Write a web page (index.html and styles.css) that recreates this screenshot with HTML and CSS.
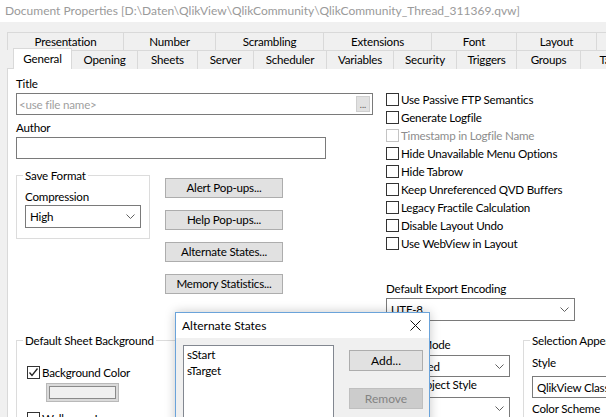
FILE: index.html
```html
<!DOCTYPE html>
<html>
<head>
<meta charset="utf-8">
<title>Document Properties</title>
<link rel="stylesheet" href="styles.css">
</head>
<body>
<div class="titlebar">Document Properties [D:\Daten\QlikView\QlikCommunity\QlikCommunity_Thread_311369.qvw]</div>

<div class="tabstrip">
  <div class="tabrow tabrow-back">
    <div class="tab">Presentation</div>
    <div class="tab">Number</div>
    <div class="tab">Scrambling</div>
    <div class="tab">Extensions</div>
    <div class="tab">Font</div>
    <div class="tab">Layout</div>
    <div class="tab"></div>
  </div>
  <div class="tabrow tabrow-front">
    <div class="tab tab-active">General</div>
    <div class="tab">Opening</div>
    <div class="tab">Sheets</div>
    <div class="tab">Server</div>
    <div class="tab">Scheduler</div>
    <div class="tab">Variables</div>
    <div class="tab">Security</div>
    <div class="tab">Triggers</div>
    <div class="tab">Groups</div>
    <div class="tab">Tabs</div>
  </div>
</div>

<div class="panel">
  <div class="top">
    <div class="col-left">
      <div class="label">Title</div>
      <div class="textbox textbox-title"><span>&lt;use file name&gt;</span><span class="browse">...</span></div>
      <div class="label label-gap">Author</div>
      <div class="textbox textbox-author"></div>

      <div class="row">
        <div class="group group-save">
          <div class="group-title">Save Format</div>
          <div class="label label-compression">Compression</div>
          <div class="select select-high"><span>High</span>
            <svg class="chev" width="9" height="5" viewBox="0 0 9 5"><polyline points="0.5,0.5 4.5,4.5 8.5,0.5" fill="none" stroke="#606060" stroke-width="1"/></svg>
          </div>
        </div>
        <div class="buttons">
          <div class="btn">Alert Pop-ups...</div>
          <div class="btn">Help Pop-ups...</div>
          <div class="btn">Alternate States...</div>
          <div class="btn">Memory Statistics...</div>
        </div>
      </div>
    </div>

    <div class="col-right">
      <div class="check"><span class="box"></span>Use Passive FTP Semantics</div>
      <div class="check"><span class="box"></span>Generate Logfile</div>
      <div class="check check-disabled"><span class="box"></span>Timestamp in Logfile Name</div>
      <div class="check"><span class="box"></span>Hide Unavailable Menu Options</div>
      <div class="check"><span class="box"></span>Hide Tabrow</div>
      <div class="check"><span class="box"></span>Keep Unreferenced QVD Buffers</div>
      <div class="check"><span class="box"></span>Legacy Fractile Calculation</div>
      <div class="check"><span class="box"></span>Disable Layout Undo</div>
      <div class="check"><span class="box"></span>Use WebView in Layout</div>

      <div class="label label-encoding">Default Export Encoding</div>
      <div class="select select-encoding"><span>UTF-8</span>
        <svg class="chev" width="9" height="5" viewBox="0 0 9 5"><polyline points="0.5,0.5 4.5,4.5 8.5,0.5" fill="none" stroke="#606060" stroke-width="1"/></svg>
      </div>
    </div>
  </div>

  <div class="bottom">
    <div class="group group-sheetbg">
      <div class="group-title">Default Sheet Background</div>
      <div class="check check-bg"><span class="box"><svg width="11" height="11" viewBox="0 0 11 11"><polyline points="1.5,5.5 4,8.5 9.5,1.5" fill="none" stroke="#222" stroke-width="1.3"/></svg></span>Background Color</div>
      <div class="colorbtn"><div class="colorbtn-inner"></div></div>
      <div class="check check-wall"><span class="box"></span>Wallpaper Image</div>
    </div>

    <div class="col-mid">
      <div class="label label-mode">Styling Mode</div>
      <div class="select select-mid"><span>Advanced</span>
        <svg class="chev" width="9" height="5" viewBox="0 0 9 5"><polyline points="0.5,0.5 4.5,4.5 8.5,0.5" fill="none" stroke="#606060" stroke-width="1"/></svg>
      </div>
      <div class="label">Sheet Object Style</div>
      <div class="select select-mid select-style"><span>Soft</span>
        <svg class="chev" width="9" height="5" viewBox="0 0 9 5"><polyline points="0.5,0.5 4.5,4.5 8.5,0.5" fill="none" stroke="#606060" stroke-width="1"/></svg>
      </div>
    </div>

    <div class="group group-selection">
      <div class="group-title">Selection Appearance</div>
      <div class="label label-style">Style</div>
      <div class="select select-sel"><span>QlikView Classic</span></div>
      <div class="label label-scheme">Color Scheme</div>
    </div>
  </div>
</div>

<div class="dialog">
  <div class="dialog-title">
    <span>Alternate States</span>
    <svg width="11" height="11" viewBox="0 0 11 11"><path d="M0.5 0.5 L10.5 10.5 M10.5 0.5 L0.5 10.5" stroke="#111" stroke-width="1" fill="none"/></svg>
  </div>
  <div class="dialog-body">
    <div class="listbox">
      <div class="list-item">sStart</div>
      <div class="list-item">sTarget</div>
    </div>
    <div class="dialog-buttons">
      <div class="btn btn-small">Add...</div>
      <div class="btn btn-small btn-disabled">Remove</div>
    </div>
  </div>
</div>
</body>
</html>
```

FILE: styles.css
```css
* { box-sizing: border-box; }
html, body { margin: 0; padding: 0; }
body {
  width: 606px;
  height: 417px;
  overflow: hidden;
  position: relative;
  background: #f0f0f0;
  font-family: Lato, "Noto Sans", sans-serif;
  font-size: 11.6px;
  letter-spacing: -0.2px;
  color: #000;
}

.titlebar {
  height: 22px;
  line-height: 21px;
  padding-left: 5px;
  background: #fff;
  color: #9a9a9a;
  white-space: nowrap;
  font-size: 12px;
  letter-spacing: 0;
}

.tabstrip { margin-top: 10px; width: 720px; }
.tabrow { display: grid; height: 18px; }
.tabrow-back {
  margin-left: 7px;
  grid-template-columns: 116px 92px 108px 108px 85px 80px 60px;
}
.tabrow-front {
  margin-left: 13px;
  grid-template-columns: 59px 65px 60px 56px 73px 67px 63px 60px 64px 60px;
}
.tab {
  border-top: 1px solid #d9d9d9;
  border-left: 1px solid #d9d9d9;
  background: #f0f0f0;
  text-align: center;
  line-height: 17px;
  white-space: nowrap;
  overflow: hidden;
}
.tab-active {
  position: relative;
  z-index: 2;
  margin-top: -2px;
  height: 21px;
  line-height: 19px;
  background: #fff;
  border-right: 1px solid #d9d9d9;
}
.tab-active + .tab { border-left: none; }

.panel {
  margin-left: 7px;
  width: 640px;
  height: 360px;
  background: #fff;
  border: 1px solid #d9d9d9;
  padding: 7px 0 0 8px;
}

.top { display: flex; gap: 13px; }
.col-left { width: 357px; flex: none; }
.col-right { width: 210px; flex: none; padding-top: 14px; }

.label { height: 15px; line-height: 15px; white-space: nowrap; }
.label-gap { margin-top: 5px; }

.textbox {
  margin-top: 2px;
  height: 22px;
  border: 1px solid #7a7a7a;
  background: #fff;
  display: flex;
  align-items: center;
  padding-left: 2px;
}
.textbox-title {
  width: 357px;
  color: #a0a0a0;
  justify-content: space-between;
  padding-right: 2px;
}
.textbox-author { width: 310px; }
.browse {
  width: 14px;
  height: 16px;
  background: #e1e1e1;
  border: 1px solid #cfcfcf;
  color: #555;
  font-size: 9px;
  letter-spacing: 0;
  line-height: 16px;
  text-align: center;
}

.row { display: flex; align-items: flex-start; margin-top: 16px; }

.group {
  flex: none;
  border: 1px solid #dcdcdc;
  padding-left: 8px;
}
.group-title {
  display: table;
  height: 15px;
  line-height: 15px;
  margin-top: -8px;
  margin-left: -2px;
  padding: 0 2px;
  background: #fff;
  white-space: nowrap;
}
.group-save { width: 134px; height: 64px; }
.label-compression { margin-top: 6px; }

.select {
  height: 23px;
  margin-top: 1px;
  border: 1px solid #7a7a7a;
  background: #fff;
  display: flex;
  align-items: center;
  justify-content: space-between;
  padding: 0 5px 0 4px;
  white-space: nowrap;
  overflow: hidden;
}
.select-high { width: 116px; }
.chev { flex: none; }

.buttons {
  flex: none;
  margin-left: 15px;
  margin-top: 3px;
  display: flex;
  flex-direction: column;
  gap: 12px;
}
.btn {
  width: 118px;
  height: 20px;
  line-height: 18px;
  background: #e1e1e1;
  border: 1px solid #adadad;
  text-align: center;
  white-space: nowrap;
}

.check {
  display: flex;
  align-items: center;
  height: 18px;
  white-space: nowrap;
}
.box {
  flex: none;
  width: 13px;
  height: 13px;
  margin-right: 2px;
  border: 1px solid #333;
  background: #fff;
  display: flex;
  align-items: center;
  justify-content: center;
}
.check-disabled { color: #8d8d8d; }
.check-disabled .box { border-color: #c4c4c4; }

.label-encoding { margin-top: 29px; }
.select-encoding { width: 189px; margin-top: 2px; }

.bottom { display: flex; align-items: flex-start; margin-top: 11px; }

.group-sheetbg { width: 357px; height: 120px; margin-top: 8px; }
.check-bg { margin-top: 15px; margin-left: 2px; }
.colorbtn {
  margin: 2px 0 0 21px;
  width: 73px;
  height: 19px;
  border: 1px solid #b9b9b9;
  background: #dadada;
  padding: 2px;
}
.colorbtn-inner {
  height: 100%;
  border: 1px solid #8a8a8a;
  background: #f0f0f0;
}
.check-wall { margin-top: 7px; margin-left: 2px; }

.col-mid { flex: none; width: 124px; margin-left: 13px; }
.label-mode { margin-top: 5px; }
.select-mid { height: 22px; margin-top: 3px; }
.select-style { margin-top: 5px; }

.group-selection { width: 200px; height: 120px; margin-top: 8px; margin-left: 13px; }
.label-style { margin-top: 7px; }
.select-sel { height: 22px; margin-top: 6px; width: 190px; }
.label-scheme { margin-top: 3px; }

.dialog {
  position: absolute;
  left: 175px;
  top: 312px;
  width: 255px;
  height: 130px;
  border: 1px solid #6aa3da;
  background: #f0f0f0;
  box-shadow: 0 0 10px rgba(0, 0, 0, 0.22);
}
.dialog-title {
  height: 25px;
  background: #fff;
  display: flex;
  align-items: center;
  justify-content: space-between;
  padding: 0 8px 0 6px;
  font-size: 12px;
  letter-spacing: 0;
}
.dialog-body { display: flex; align-items: flex-start; padding: 7px 0 0 7px; }
.listbox {
  width: 151px;
  height: 90px;
  border: 1px solid #828790;
  background: #fff;
  padding: 1px 0 0 3px;
}
.list-item { height: 16px; line-height: 16px; }
.dialog-buttons {
  margin-left: 15px;
  margin-top: 5px;
  display: flex;
  flex-direction: column;
  gap: 17px;
}
.btn-small { width: 74px; height: 21px; line-height: 19px; font-size: 12px; letter-spacing: 0; }
.btn-disabled { background: #cccccc; border-color: #bfbfbf; color: #838383; }
```
